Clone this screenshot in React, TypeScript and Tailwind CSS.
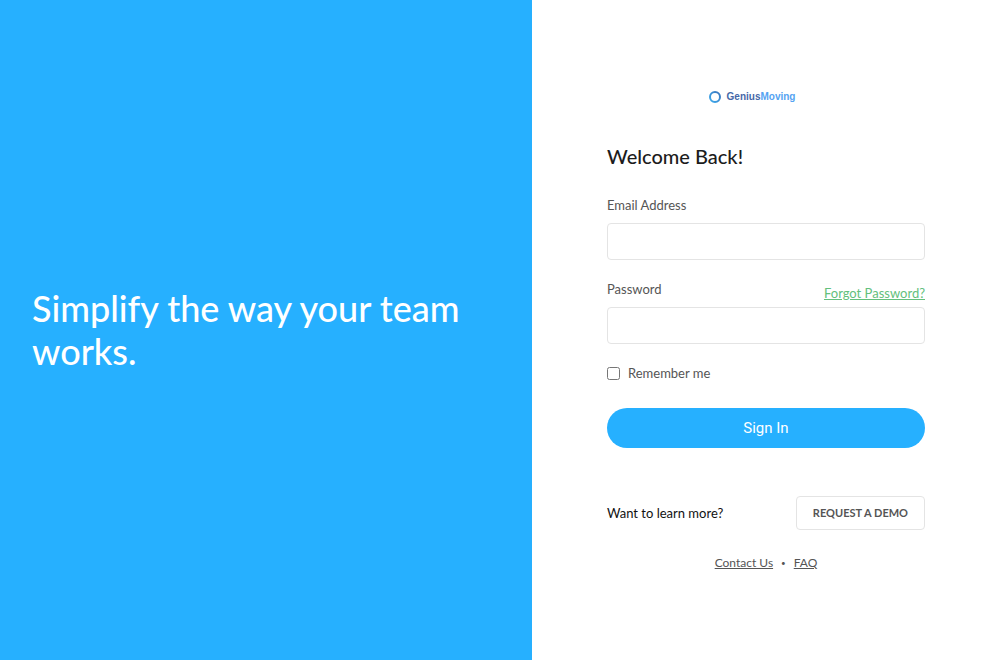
import React from "react";

function Logo() {
  return (
    <div className="flex h-4 items-center justify-center gap-1.5 pr-7">
      <svg viewBox="0 0 12 12" className="size-3" fill="none" aria-hidden="true">
        <defs>
          <linearGradient id="ring" x1="0" y1="12" x2="12" y2="0" gradientUnits="userSpaceOnUse">
            <stop offset="0" stopColor="#3cb0f2" />
            <stop offset="1" stopColor="#3a6fb8" />
          </linearGradient>
        </defs>
        <circle cx="6" cy="6" r="5" stroke="url(#ring)" strokeWidth="2" />
      </svg>
      <span className="font-['Liberation_Sans',sans-serif] text-[10px] leading-4 font-bold text-[#4668a8]">
        Genius<span className="text-[#55a3f2]">Moving</span>
      </span>
    </div>
  );
}

const fieldClass =
  "block h-[37px] w-full rounded-[4px] border border-[#e4e4e4] bg-white px-3 text-[13px] text-[#222] outline-none focus:border-[#26b0ff]";

export default function App() {
  return (
    <main className="flex min-h-screen bg-white font-[Lato,sans-serif] text-[13px] leading-5 text-[#555]">
      <section className="flex w-[53.2%] items-center bg-[#26b0ff] px-8">
        <h1 className="text-[36px] leading-[43px] font-medium text-white">
          Simplify the way your team works.
        </h1>
      </section>

      <section className="flex flex-1 flex-col justify-center px-[75px] pt-0.5">
        <Logo />

        <h2 className="mt-[39px] text-[20px] leading-6 font-medium text-[#1c1c1c]">Welcome Back!</h2>

        <form className="mt-[27px]" onSubmit={(e) => e.preventDefault()}>
          <label htmlFor="email" className="mb-2 block">
            Email Address
          </label>
          <input id="email" type="email" className={fieldClass} />

          <div className="mt-[19px] mb-1 flex items-start justify-between">
            <label htmlFor="password">Password</label>
            <a href="#forgot" className="mt-1 text-[#63c07c] underline">
              Forgot Password?
            </a>
          </div>
          <input id="password" type="password" className={fieldClass} />

          <label className="mt-[19px] flex items-center gap-2">
            <input type="checkbox" className="size-[13px]" />
            Remember me
          </label>

          <button
            type="submit"
            className="mt-[25px] h-10 w-full rounded-full bg-[#26b0ff] font-[Roboto,sans-serif] text-[15px] text-white"
          >
            Sign In
          </button>
        </form>

        <div className="mt-12 flex items-center justify-between">
          <p className="text-[#111]">Want to learn more?</p>
          <button type="button" className="h-[34px] rounded-[4px] border border-[#e4e4e4] px-4 text-[11px] font-bold">
            REQUEST A DEMO
          </button>
        </div>

        <nav className="mt-[23px] flex justify-center gap-2 text-[12px] leading-5">
          <a href="#contact" className="underline">
            Contact Us
          </a>
          <span className="text-[8px]">•</span>
          <a href="#faq" className="underline">
            FAQ
          </a>
        </nav>
      </section>
    </main>
  );
}
